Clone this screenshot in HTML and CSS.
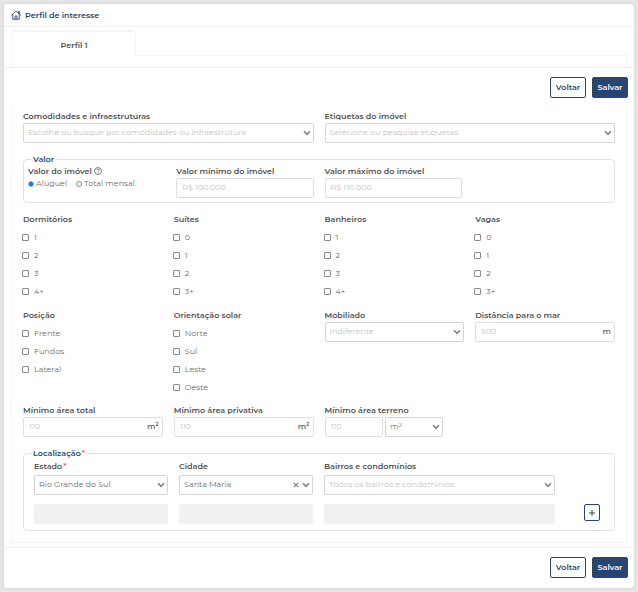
FILE: index.html
```html
<!DOCTYPE html>
<html lang="pt-BR">
<head>
  <meta charset="UTF-8">
  <meta name="viewport" content="width=device-width, initial-scale=1.0">
  <title>Perfil de interesse</title>
  <link rel="stylesheet" href="styles.css">
</head>
<body>
  <svg class="sprite" aria-hidden="true">
    <symbol id="chevron" viewBox="0 0 8 6"><path d="M1 1.2 4 4.4 7 1.2" fill="none" stroke="currentColor" stroke-width="1.6"/></symbol>
  </svg>

  <form class="card">
    <header class="card-header">
      <svg class="home" viewBox="0 0 20 20" fill="none" stroke="currentColor" stroke-width="1.7" stroke-linecap="round" stroke-linejoin="round" aria-hidden="true">
        <path d="M1 10.500 10 2l9 8.500M15 6.500V3h1.800v5M3.500 9v9.500h13V9M8 18v-6h4v6"/>
      </svg>
      <h1>Perfil de interesse</h1>
    </header>

    <nav class="tabs">
      <a class="tab" href="#perfil-1">Perfil 1</a>
      <div class="tabs-line"></div>
    </nav>

    <div class="actions actions-top">
      <button type="button" class="btn">Voltar</button>
      <button type="submit" class="btn btn-primary">Salvar</button>
    </div>

    <main class="panel" id="perfil-1">
      <div class="row halves">
        <div class="field">
          <label for="comodidades">Comodidades e infraestruturas</label>
          <div class="select">
            <select id="comodidades" class="empty"><option>Escolhe ou busque por comodidades ou infraestrutura</option></select>
            <svg><use href="#chevron"/></svg>
          </div>
        </div>
        <div class="field">
          <label for="etiquetas">Etiquetas do imóvel</label>
          <div class="select">
            <select id="etiquetas" class="empty"><option>Selecione ou pesquise etiquetas</option></select>
            <svg><use href="#chevron"/></svg>
          </div>
        </div>
      </div>

      <fieldset class="group">
        <legend>Valor</legend>
        <div class="row quarters">
          <div class="field" role="radiogroup" aria-labelledby="tipo-valor">
            <span class="label" id="tipo-valor">Valor do imóvel
              <svg class="help" viewBox="0 0 16 16" fill="none" stroke="currentColor" stroke-width="1.5" aria-hidden="true">
                <circle cx="8" cy="8" r="7"/>
                <path d="M5.800 6.300c0-3 4.500-3 4.500-.2C10.300 8 8 7.800 8 9.600M8 11v1.500"/>
              </svg>
            </span>
            <div class="radios">
              <label><input type="radio" name="tipo" checked>Aluguel</label>
              <label><input type="radio" name="tipo">Total mensal</label>
            </div>
          </div>
          <div class="field">
            <label for="valor-min">Valor mínimo do imóvel</label>
            <input type="text" id="valor-min" placeholder="R$ 100.000">
          </div>
          <div class="field">
            <label for="valor-max">Valor máximo do imóvel</label>
            <input type="text" id="valor-max" placeholder="R$ 110.000">
          </div>
        </div>
      </fieldset>

      <div class="row quarters rooms">
        <fieldset class="checks">
          <legend>Dormitórios</legend>
          <label><input type="checkbox">1</label>
          <label><input type="checkbox">2</label>
          <label><input type="checkbox">3</label>
          <label><input type="checkbox">4+</label>
        </fieldset>
        <fieldset class="checks">
          <legend>Suítes</legend>
          <label><input type="checkbox">0</label>
          <label><input type="checkbox">1</label>
          <label><input type="checkbox">2</label>
          <label><input type="checkbox">3+</label>
        </fieldset>
        <fieldset class="checks">
          <legend>Banheiros</legend>
          <label><input type="checkbox">1</label>
          <label><input type="checkbox">2</label>
          <label><input type="checkbox">3</label>
          <label><input type="checkbox">4+</label>
        </fieldset>
        <fieldset class="checks">
          <legend>Vagas</legend>
          <label><input type="checkbox">0</label>
          <label><input type="checkbox">1</label>
          <label><input type="checkbox">2</label>
          <label><input type="checkbox">3+</label>
        </fieldset>
      </div>

      <div class="row quarters details">
        <fieldset class="checks">
          <legend>Posição</legend>
          <label><input type="checkbox">Frente</label>
          <label><input type="checkbox">Fundos</label>
          <label><input type="checkbox">Lateral</label>
        </fieldset>
        <fieldset class="checks">
          <legend>Orientação solar</legend>
          <label><input type="checkbox">Norte</label>
          <label><input type="checkbox">Sul</label>
          <label><input type="checkbox">Leste</label>
          <label><input type="checkbox">Oeste</label>
        </fieldset>
        <div class="field">
          <label for="mobiliado">Mobiliado</label>
          <div class="select">
            <select id="mobiliado" class="empty"><option>Indiferente</option></select>
            <svg><use href="#chevron"/></svg>
          </div>
        </div>
        <div class="field">
          <label for="distancia">Distância para o mar</label>
          <div class="unit"><input type="text" id="distancia" placeholder="500"><span>m</span></div>
        </div>
      </div>

      <div class="row quarters areas">
        <div class="field">
          <label for="area-total">Mínimo área total</label>
          <div class="unit"><input type="text" id="area-total" placeholder="110"><span>m²</span></div>
        </div>
        <div class="field">
          <label for="area-privativa">Mínimo área privativa</label>
          <div class="unit"><input type="text" id="area-privativa" placeholder="110"><span>m²</span></div>
        </div>
        <div class="field">
          <label for="area-terreno">Mínimo área terreno</label>
          <div class="pair">
            <input type="text" id="area-terreno" placeholder="110">
            <div class="select">
              <select aria-label="Unidade"><option>m²</option></select>
              <svg><use href="#chevron"/></svg>
            </div>
          </div>
        </div>
      </div>

      <fieldset class="group location">
        <legend>Localização<em>*</em></legend>
        <div class="row places">
          <div class="field">
            <label for="estado">Estado<em>*</em></label>
            <div class="select">
              <select id="estado"><option>Rio Grande do Sul</option></select>
              <svg><use href="#chevron"/></svg>
            </div>
          </div>
          <div class="field">
            <label for="cidade">Cidade</label>
            <div class="select">
              <select id="cidade"><option>Santa Maria</option></select>
              <button type="button" class="clear" aria-label="Limpar">
                <svg viewBox="0 0 6 6"><path d="M.8.8l4.400 4.400M5.200.8.8 5.200" stroke="currentColor" stroke-width="1.2"/></svg>
              </button>
              <svg><use href="#chevron"/></svg>
            </div>
          </div>
          <div class="field">
            <label for="bairros">Bairros e condomínios</label>
            <div class="select">
              <select id="bairros" class="empty"><option>Todos os bairros e condomínios</option></select>
              <svg><use href="#chevron"/></svg>
            </div>
          </div>
        </div>
        <div class="row places next">
          <input type="text" disabled aria-label="Estado">
          <input type="text" disabled aria-label="Cidade">
          <input type="text" disabled aria-label="Bairros">
          <button type="button" class="add" aria-label="Adicionar">
            <svg viewBox="0 0 8 8"><path d="M4 1v6M1 4h6" stroke="currentColor" stroke-width="1"/></svg>
          </button>
        </div>
      </fieldset>
    </main>

    <footer class="actions actions-bottom">
      <button type="button" class="btn">Voltar</button>
      <button type="submit" class="btn btn-primary">Salvar</button>
    </footer>
  </form>
</body>
</html>
```

FILE: styles.css
```css
* {
  margin: 0;
  padding: 0;
  box-sizing: border-box;
}

body {
  font-family: Montserrat, Inter, sans-serif;
  font-size: 8px;
  color: #6b6b6b;
  background: #e5e5e5;
  padding: 4px;
}

input, select, button {
  font: inherit;
  color: inherit;
}

.sprite {
  display: none;
}

em {
  color: #ff5a5a;
  font-style: normal;
  margin-left: 1px;
}

.card {
  background: #fff;
  border-radius: 3px;
  box-shadow: 0 0 2px rgba(0, 0, 0, 0.15);
}

.card-header {
  display: flex;
  align-items: center;
  gap: 4px;
  height: 23px;
  padding: 0 7px;
  border-bottom: 1px solid #f0f0f0;
  color: #28456f;
}

.card-header h1 {
  font-size: 8px;
  font-weight: 600;
}

.home {
  width: 10px;
  height: 10px;
}

/* tabs */
.tabs {
  display: flex;
  align-items: flex-end;
  padding: 4px 7px 0;
  border-bottom: 1px solid #f0f0f0;
}

.tab {
  width: 125px;
  height: 36px;
  padding-top: 8px;
  line-height: 10px;
  border: 1px solid #f3f3f3;
  border-width: 1px 0 0 1px;
  border-radius: 4px 4px 0 0;
  box-shadow: 0 -1px 1px rgba(0, 0, 0, 0.03);
  text-align: center;
  text-decoration: none;
  font-weight: 600;
  color: #505050;
  background: linear-gradient(#f3f3f3, #f3f3f3) right top / 1px 25px no-repeat;
}

.tabs-line {
  flex: 1;
  height: 12px;
  border: 1px solid #f3f3f3;
  border-width: 1px 1px 0 0;
}

/* buttons */
.actions {
  display: flex;
  justify-content: flex-end;
  gap: 6px;
  padding: 9px 6px;
}

.actions-top {
  padding-bottom: 8px;
}

.actions-bottom {
  margin-top: 4px;
  padding-bottom: 10px;
  border-top: 1px solid #f0f0f0;
}

.btn {
  width: 36px;
  height: 21px;
  padding-bottom: 2px;
  border: 1px solid #28456f;
  border-radius: 2px;
  background: #fff;
  color: #28456f;
  font-weight: 600;
}

.btn-primary {
  background: #28456f;
  color: #fff;
}

/* form */
.panel {
  margin: 0 7px;
  padding: 4px 11px 11px;
  border: 1px solid #f3f3f3;
  border-top: 0;
}

.row {
  display: grid;
  gap: 11px;
}

.halves {
  grid-template-columns: repeat(2, 1fr);
}

.quarters {
  grid-template-columns: repeat(4, 1fr);
}

.places {
  grid-template-columns: 134fr 134fr 231fr 34fr;
}

.field > label,
.label,
.checks legend {
  display: block;
  line-height: 13px;
  font-weight: 600;
  color: #505050;
  white-space: nowrap;
}

input[type="text"],
select {
  display: block;
  width: 100%;
  height: 20px;
  padding: 0 5px 2px;
  border: 1px solid #dedede;
  border-radius: 2px;
  background: #fff;
  outline: none;
}

select {
  appearance: none;
  padding: 0 18px 2px 4px;
  border-color: #d4d4d4;
  text-overflow: ellipsis;
}

select.empty,
::placeholder {
  color: #c4c4c4;
}

input[type="text"]:disabled {
  border-color: #f1f1f1;
  background: #f1f1f1;
}

.select {
  position: relative;
}

.select > svg {
  position: absolute;
  right: 3px;
  top: 7px;
  width: 8px;
  height: 6px;
  color: #808080;
  pointer-events: none;
}

.clear {
  position: absolute;
  right: 14px;
  top: 7px;
  width: 6px;
  height: 6px;
  border: 0;
  background: none;
  color: #808080;
}

.clear svg {
  display: block;
}

.unit {
  position: relative;
}

.unit span {
  position: absolute;
  right: 4px;
  top: 0;
  line-height: 18px;
  font-weight: 600;
}

.pair {
  display: grid;
  grid-template-columns: 1fr 1fr;
  gap: 2px;
  width: 85%;
}

/* bordered groups */
.group {
  min-width: 0;
  margin-top: 10px;
  padding: 0 4px 4px;
  border: 1px solid #e0e0e0;
  border-radius: 4px;
}

.group > legend {
  margin-left: 4px;
  padding: 0 1px;
  line-height: 12px;
  font-weight: 600;
  color: #28456f;
}

.location {
  padding: 1px 14px 6px 10px;
}

.location > legend {
  margin-left: -2px;
}

.location .field > label {
  margin-bottom: 2px;
}

.next {
  margin-top: 9px;
}

.add {
  justify-self: end;
  width: 16px;
  height: 17px;
  border: 1px solid #28456f;
  border-radius: 2px;
  background: #fff;
  color: #28456f;
}

.add svg {
  display: block;
  width: 8px;
  height: 8px;
  margin: 0 auto;
}

.help {
  width: 8px;
  height: 8px;
  vertical-align: -1px;
}

.radios {
  display: flex;
  gap: 9px;
}

.radios label {
  display: flex;
  align-items: center;
  gap: 2px;
  line-height: 11px;
  white-space: nowrap;
}

/* ticks */
input[type="radio"],
input[type="checkbox"] {
  appearance: none;
  width: 7px;
  height: 7px;
  border: 1px solid #8a8a8a;
  border-radius: 1px;
  background: #fff;
}

input[type="radio"] {
  width: 6px;
  height: 6px;
  border-radius: 50%;
}

input[type="radio"]:checked {
  border-color: #7db4f7;
  background: #1a73e8;
}

.checks {
  min-width: 0;
  border: 0;
}

.checks legend {
  margin-bottom: 2px;
}

.checks label {
  display: flex;
  align-items: center;
  gap: 5px;
  height: 18px;
  margin-left: -1px;
}

.rooms {
  margin-top: 10px;
}

/* the longest list runs into the space above the next row */
.details {
  height: 81px;
  margin-top: 9px;
}

.areas {
  margin-top: 14px;
}
```
